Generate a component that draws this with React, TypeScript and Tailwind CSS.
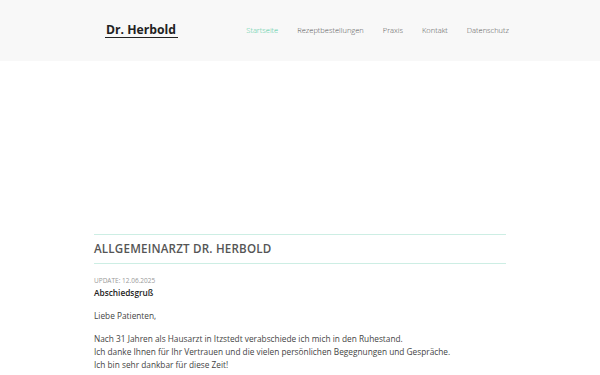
import { type FC } from 'react'

const navItems = ['Startseite', 'Rezeptbestellungen', 'Praxis', 'Kontakt', 'Datenschutz']

const Header: FC = () => (
  <header className="h-[61px] bg-[#f8f8f8] flex items-center justify-between pl-[105px] pr-[91px]">
    <a className="text-[12.2px] font-bold text-[#222] border-b border-[#222] pr-[2px] pl-[1px] leading-[14px] pt-[1px] mt-[-1px]">
      Dr. Herbold
    </a>
    <nav className="flex items-center gap-[19px] text-[7.5px] font-light pt-[1px]">
      {navItems.map((item, i) => (
        <span key={item} className={i === 0 ? 'text-[#4fcb9f]' : 'text-[#555]'}>{item}</span>
      ))}
    </nav>
  </header>
)

export default function App() {
  return (
    <div className="min-h-screen bg-white" style={{ fontFamily: '"Open Sans", sans-serif' }}>
      <Header />
      <main className="w-[412px] mx-auto pt-[173px]">
        <h1 className="border-y border-[#cdeee4] py-[6px] text-[11.6px] font-semibold text-[#555] tracking-[0.2px] leading-[16px] h-[30px]">
          ALLGEMEINARZT DR. HERBOLD
        </h1>
        <div className="pt-[12px] text-[8.3px] leading-[13px] text-[#444]">
          <p className="text-[6.5px] text-[#999] leading-[10px]">UPDATE: 12.06.2025</p>
          <p className="font-semibold text-[#222]">Abschiedsgruß</p>
          <p className="mt-[10px]">Liebe Patienten,</p>
          <p className="mt-[10px]">
            Nach 31 Jahren als Hausarzt in Itzstedt verabschiede ich mich in den Ruhestand.<br />
            Ich danke Ihnen für Ihr Vertrauen und die vielen persönlichen Begegnungen und Gespräche.<br />
            Ich bin sehr dankbar für diese Zeit!
          </p>
        </div>
      </main>
    </div>
  )
}
